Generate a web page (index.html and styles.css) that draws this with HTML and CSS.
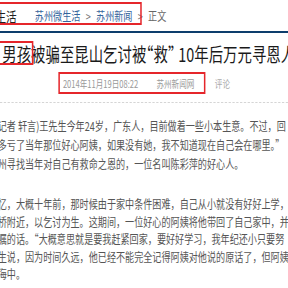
FILE: index.html
```html
<!DOCTYPE html>
<html lang="zh-CN">
<head>
<meta charset="utf-8">
<title>男孩被骗至昆山乞讨被“救” 10年后万元寻恩人</title>
<link rel="stylesheet" href="styles.css">
</head>
<body>
<div class="page">
  <header class="hdr">
    <span class="site">微生活</span>
    <nav class="crumbs">
      <a class="crumb" href="#">苏州微生活</a><span class="sep">&gt;</span><a class="crumb" href="#">苏州新闻</a><span class="sep">&gt;</span><span class="cur">正文</span>
    </nav>
  </header>
  <h1 class="title">男孩被骗至昆山乞讨被“救” 10年后万元寻恩人</h1>
  <div class="meta">
    <span class="date">2014年11月19日08:22</span>
    <span class="src">苏州新闻网</span>
    <span class="cmt">评论</span>
  </div>
  <div class="article">
    <p class="para p1">
      <span class="ln">记者 轩言)王先生今年24岁，广东人，目前做着一些小本生意。不过，回</span>
      <span class="ln">多亏了当年那位好心阿姨，如果没有她，我不知道现在自己会在哪里。”</span>
      <span class="ln">州寻找当年对自己有救命之恩的，一位名叫陈彩萍的好心人。</span>
    </p>
    <p class="para p2">
      <span class="ln">忆，大概十年前，那时候由于家中条件困难，自己从小就没有好好上学，</span>
      <span class="ln">桥附近，以乞讨为生。这期间，一位好心的阿姨将他带回了自己家中，并</span>
      <span class="ln">嘱的话。“大概意思就是要我赶紧回家，要好好学习，我年纪还小只要努</span>
      <span class="ln">生说，因为时间久远，他已经不能完全记得阿姨对他说的原话了，但阿姨</span>
      <span class="ln">海中。</span>
    </p>
  </div>
  <div class="mark mark-crumbs"></div>
  <div class="mark mark-kw"></div>
  <div class="mark mark-meta"></div>
</div>
</body>
</html>
```
FILE: styles.css
```css
html, body {
  margin: 0;
  padding: 0;
  background: #fff;
  overflow: hidden;
}
body {
  width: 288px;
  height: 288px;
  font-family: "Noto Sans CJK SC", "Noto Sans", sans-serif;
}
.page {
  position: relative;
  width: 380px;
  transform: scaleX(0.758);
  transform-origin: 0 0;
}
.hdr {
  display: flex;
  align-items: center;
  height: 31px;
  border-bottom: 2px solid #0d3d6c;
  margin-left: -20px;
  white-space: nowrap;
}
.site {
  font-size: 14px;
  color: #222;
}
.crumbs {
  display: flex;
  align-items: center;
  margin-left: 24px;
  font-size: 12px;
}
.crumb {
  color: #34649c;
  text-decoration: none;
}
.sep {
  color: #777;
  padding: 0 7px;
}
.cur {
  color: #666;
}
.title {
  margin: 6px 0 0;
  padding-left: 3px;
  font-size: 19px;
  line-height: 30px;
  font-weight: normal;
  color: #1a1a1a;
  white-space: nowrap;
  font-feature-settings: "halt";
}
.meta {
  display: flex;
  margin-top: 3px;
  padding-left: 83px;
  padding-bottom: 6px;
  line-height: 24px;
  font-size: 10px;
  color: #999;
  border-bottom: 1px dashed #cfcfcf;
  white-space: nowrap;
}
.date {
  margin-right: 24px;
}
.src {
  margin-right: 27px;
  color: #9a9a9a;
}
.cmt {
  color: #aaa;
}
.article {
  color: #555;
  font-size: 12px;
}
.para {
  margin: 0;
}
.ln {
  display: block;
  white-space: nowrap;
  margin-left: -3px;
}
.p1 {
  margin-top: 13px;
  line-height: 19px;
}
.p2 {
  margin-top: 22px;
  line-height: 17.5px;
}
.mark {
  position: absolute;
  box-sizing: border-box;
  border: 2px solid #e5262b;
}
.mark-crumbs {
  left: -10px;
  top: 2px;
  width: 197px;
  height: 23px;
}
.mark-kw {
  left: -5px;
  top: 41px;
  width: 48.5px;
  height: 24px;
}
.mark-meta {
  left: 76.5px;
  top: 72px;
  width: 194px;
  height: 22px;
}
```
